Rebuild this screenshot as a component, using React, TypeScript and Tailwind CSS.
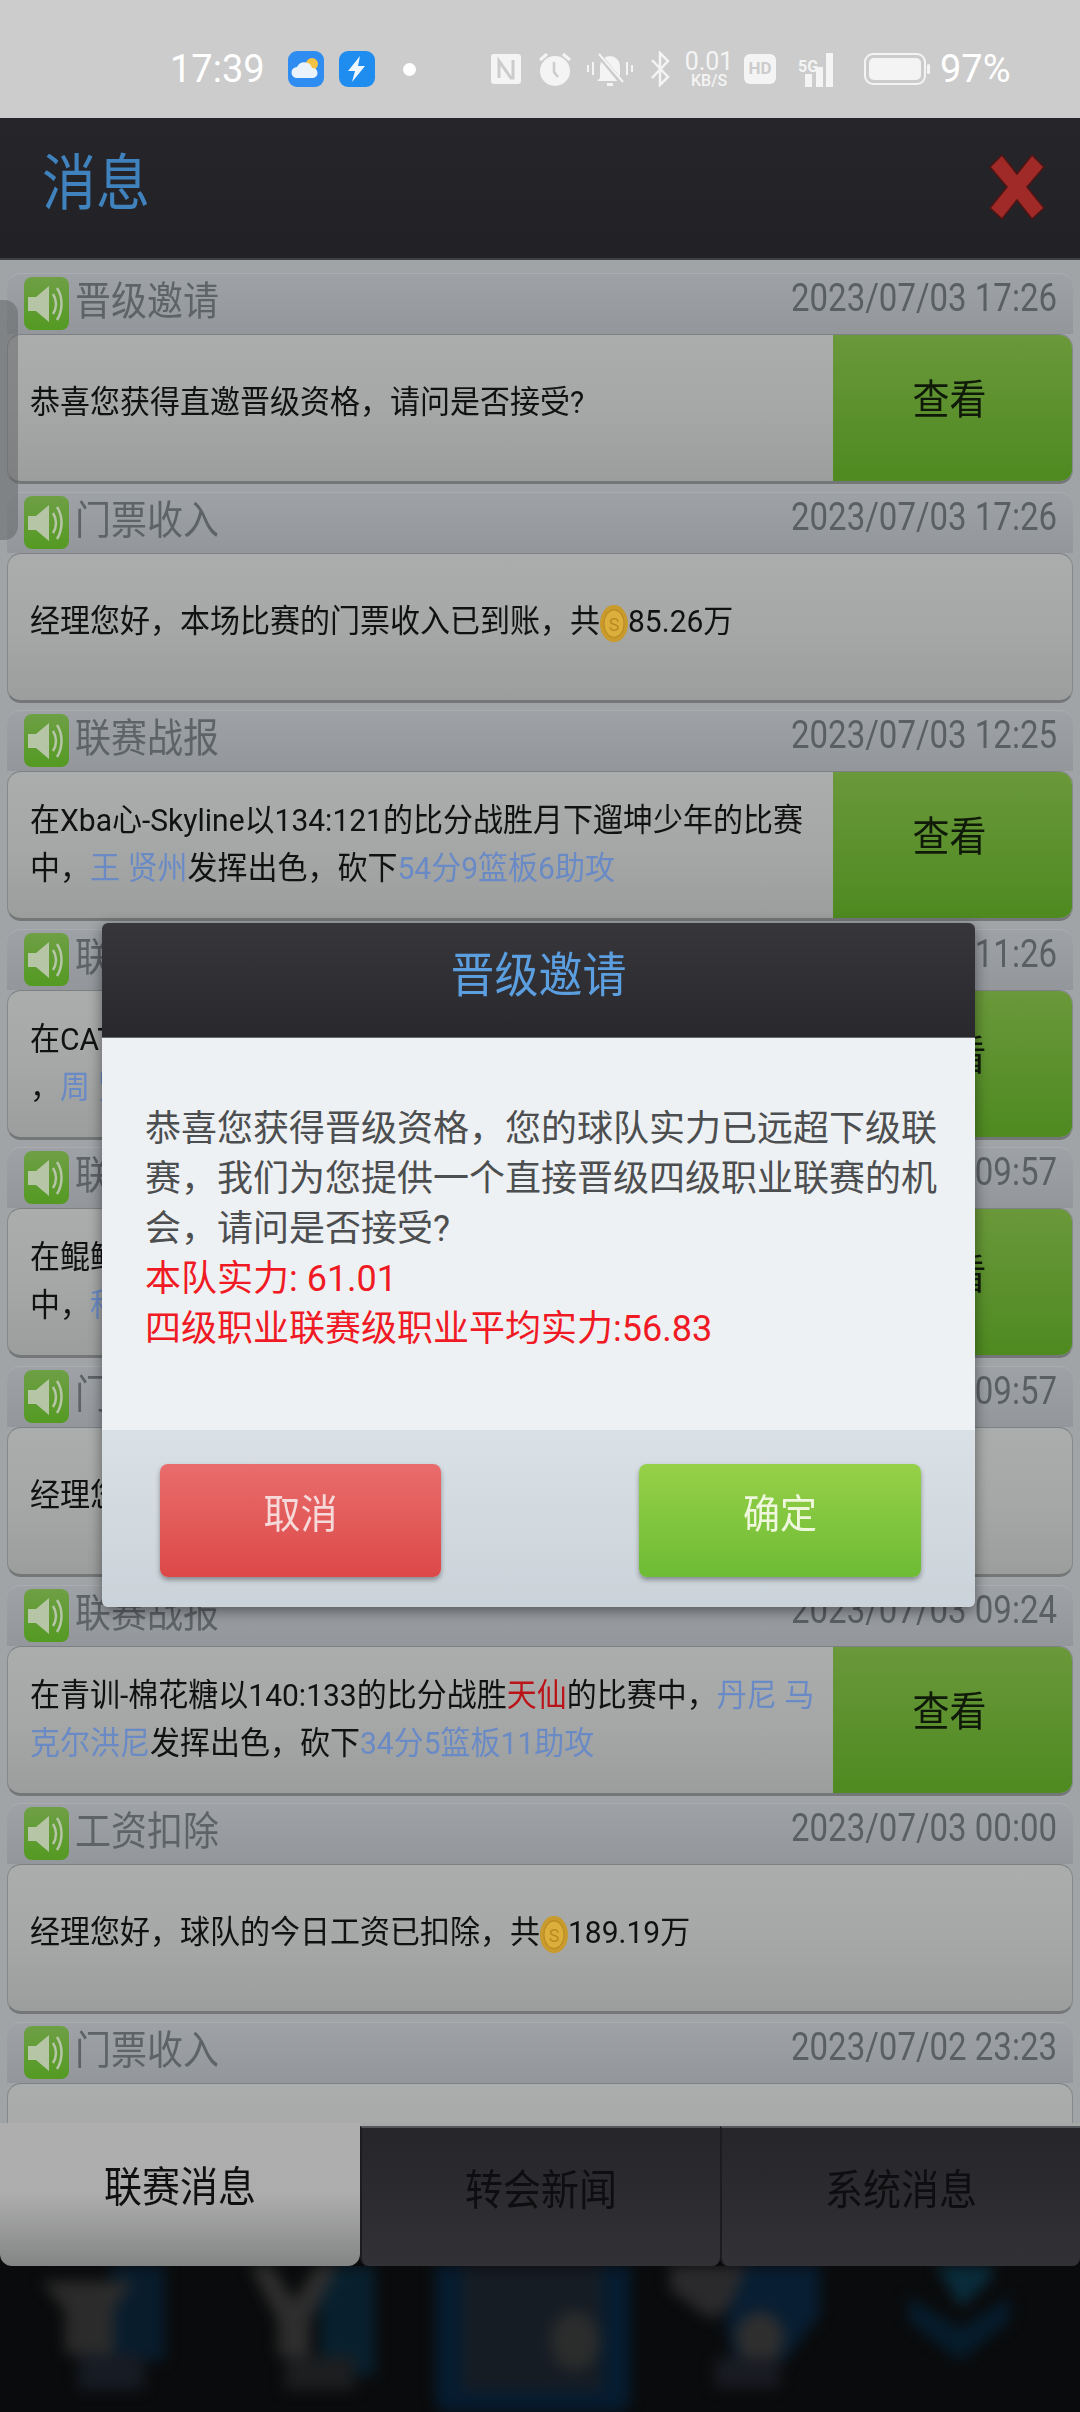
const stack = "font-[Roboto,'Noto_Sans_CJK_SC',sans-serif]";

type Part = { t: string; c?: "blue" | "red" } | { coin: true };

interface Message {
  title: string;
  time: string;
  lines: Part[][];
  button?: boolean;
}

const messages: Message[] = [
  {
    title: "晋级邀请",
    time: "2023/07/03 17:26",
    button: true,
    lines: [[{ t: "恭喜您获得直邀晋级资格，请问是否接受?" }]],
  },
  {
    title: "门票收入",
    time: "2023/07/03 17:26",
    lines: [[{ t: "经理您好，本场比赛的门票收入已到账，共" }, { coin: true }, { t: "85.26万" }]],
  },
  {
    title: "联赛战报",
    time: "2023/07/03 12:25",
    button: true,
    lines: [
      [{ t: "在Xba心-Skyline以134:121的比分战胜月下遛坤少年的比赛" }],
      [{ t: "中，" }, { t: "王 贤州", c: "blue" }, { t: "发挥出色，砍下" }, { t: "54分9篮板6助攻", c: "blue" }],
    ],
  },
  {
    title: "联赛战报",
    time: "2023/07/03 11:26",
    button: true,
    lines: [[{ t: "在CAT" }], [{ t: "，" }, { t: "周 贤", c: "blue" }]],
  },
  {
    title: "联赛战报",
    time: "2023/07/03 09:57",
    button: true,
    lines: [[{ t: "在鲲鲸" }], [{ t: "中，" }, { t: "科", c: "blue" }]],
  },
  {
    title: "门票收入",
    time: "2023/07/03 09:57",
    lines: [[{ t: "经理您好，本场比赛的门票收入已到账" }]],
  },
  {
    title: "联赛战报",
    time: "2023/07/03 09:24",
    button: true,
    lines: [
      [
        { t: "在青训-棉花糖以140:133的比分战胜" },
        { t: "天仙", c: "red" },
        { t: "的比赛中，" },
        { t: "丹尼 马", c: "blue" },
      ],
      [{ t: "克尔洪尼", c: "blue" }, { t: "发挥出色，砍下" }, { t: "34分5篮板11助攻", c: "blue" }],
    ],
  },
  {
    title: "工资扣除",
    time: "2023/07/03 00:00",
    lines: [[{ t: "经理您好，球队的今日工资已扣除，共" }, { coin: true }, { t: "189.19万" }]],
  },
  {
    title: "门票收入",
    time: "2023/07/02 23:23",
    lines: [[{ t: "" }]],
  },
];

const Speaker = () => (
  <svg width="45" height="53" viewBox="0 0 45 53" className="shrink-0">
    <defs>
      <linearGradient id="spk" x1="0" y1="0" x2="0" y2="1">
        <stop offset="0" stopColor="#6e9f45" />
        <stop offset="1" stopColor="#549a22" />
      </linearGradient>
    </defs>
    <rect width="45" height="53" rx="8" fill="url(#spk)" />
    <path d="M4 20h8L25 9v36L12 34H4z" fill="#b5c5a6" />
    <path d="M29 17c4 6 4 14 0 20" stroke="#b5c5a6" strokeWidth="2.5" fill="none" />
    <path d="M33 11c6 9 6 22 0 32" stroke="#b5c5a6" strokeWidth="2.5" fill="none" />
  </svg>
);

const Coin = () => (
  <svg width="28" height="35" viewBox="0 0 28 35" className="inline-block align-middle">
    <ellipse cx="14" cy="17.5" rx="14" ry="17.5" fill="#c99a2c" />
    <ellipse cx="14" cy="17.5" rx="10" ry="13" fill="#dcae3c" stroke="#b88a22" />
    <text x="14" y="24" textAnchor="middle" fontSize="18" fill="#b88a22" fontFamily="Roboto">
      S
    </text>
  </svg>
);

const MessageRow = ({ m }: { m: Message }) => (
  <div className="h-[218.6px] shrink-0 px-[7px]">
    <div className="flex h-[61px] items-start rounded-t-[14px] border-t border-[#a9adb0] bg-gradient-to-b from-[#9ea2a6] to-[#93979b] pt-[3px] pr-[16px] pl-[17px]">
      <Speaker />
      <div className="ml-[6px] flex flex-1 justify-between">
        <span className="-mt-[2px] inline-block origin-top scale-y-[1.1] text-[36px] leading-[48px] text-[#5e6367]">
          {m.title}
        </span>
        <span className="-mt-[4px] inline-block origin-top scale-y-[1.15] text-[33px] leading-[44px] text-[#5a5f63]">
          {m.time}
        </span>
      </div>
    </div>
    <div className="flex h-[150px] overflow-hidden rounded-[14px] border-x border-t border-b-[3px] border-x-[#86888a] border-t-[#7e8184] border-b-[#747677] bg-gradient-to-b from-[#abadad] via-[#a6a8a8] to-[#9c9e9e]">
      <div
        className={
          "flex flex-1 flex-col justify-center pl-[22px] text-[30px] leading-[48px] text-[#111111] " +
          (m.lines.length === 1 ? "pb-[12px]" : "pb-[2px]")
        }
      >
        {m.lines.map((line, i) => (
          <div key={i} className="origin-center scale-y-[1.06] whitespace-nowrap">
            {line.map((p, j) =>
              "coin" in p ? (
                <Coin key={j} />
              ) : (
                <span
                  key={j}
                  className={
                    p.c === "blue" ? "text-[#6a8ac6]" : p.c === "red" ? "text-[#bb1418]" : ""
                  }
                >
                  {p.t}
                </span>
              )
            )}
          </div>
        ))}
      </div>
      {m.button && (
        <div className="flex w-[239px] shrink-0 items-center justify-center bg-gradient-to-b from-[#6a983a] to-[#4e8a20] pr-[6px] pb-[14px] text-[37px] text-[#101a08]">
          <span className="inline-block scale-y-[1.12]">查看</span>
        </div>
      )}
    </div>
  </div>
);

const StatusBar = () => (
  <div className="flex h-[118px] shrink-0 items-center bg-[#cccccc] pt-[20px] pl-[170px] text-white">
    <span className="w-[92px] text-[38px] leading-none">17:39</span>
    <svg width="36" height="36" viewBox="0 0 36 36" className="ml-[26px]">
      <rect width="36" height="36" rx="9" fill="#2f8cf0" />
      <circle cx="24" cy="13" r="6" fill="#f6c244" />
      <path d="M9 27a5.5 5.5 0 0 1 0-11 8 8 0 0 1 15 1 5 5 0 0 1 1 10z" fill="#eaf2fb" />
    </svg>
    <svg width="36" height="36" viewBox="0 0 36 36" className="ml-[15px]">
      <rect width="36" height="36" rx="9" fill="#1f8df0" />
      <path d="M21 5 9 20h7l-3 11 13-16h-7z" fill="#eef7ff" />
    </svg>
    <span className="ml-[28px] h-[13px] w-[13px] rounded-full bg-white" />
    <svg width="30" height="30" viewBox="0 0 30 30" className="ml-[75px]">
      <rect width="30" height="30" rx="3" fill="#f4f4f4" />
      <path d="M8 24V7l12 17h2V6" stroke="#cccccc" strokeWidth="3" fill="none" />
    </svg>
    <svg width="34" height="36" viewBox="0 0 34 36" className="ml-[17px]">
      <circle cx="17" cy="20" r="15" fill="#f4f4f4" />
      <path d="M16 11v10l4 5" stroke="#cccccc" strokeWidth="2.5" fill="none" />
      <path d="M2 9 9 3M32 9l-7-6" stroke="#f4f4f4" strokeWidth="3" />
    </svg>
    <svg width="46" height="36" viewBox="0 0 46 36" className="ml-[15px]">
      <path d="M13 27V15a10 10 0 0 1 20 0v12l3 3H10z" fill="#f4f4f4" />
      <path d="M20 32h6v3h-6z" fill="#f4f4f4" />
      <path d="M11 3l25 30" stroke="#cccccc" strokeWidth="5" />
      <path d="M12 3l24 28" stroke="#f4f4f4" strokeWidth="2" />
      <path d="M1 14v7M6 11v13M40 11v13M45 14v7" stroke="#f4f4f4" strokeWidth="2" />
    </svg>
    <svg width="20" height="36" viewBox="0 0 20 36" className="ml-[17px]">
      <path d="M2 9l16 17-8 8V2l8 8L2 27" stroke="#f4f4f4" strokeWidth="2.5" fill="none" />
    </svg>
    <div className="ml-[16px] flex w-[46px] flex-col items-center text-[#f4f4f4]">
      <span className="text-[25px] leading-[22px]">0.01</span>
      <span className="text-[16px] font-medium leading-[15px]">KB/S</span>
    </div>
    <div className="ml-[12px] flex h-[30px] w-[32px] items-center justify-center rounded-[6px] bg-[#f4f4f4] text-[17px] font-bold text-[#cccccc]">
      HD
    </div>
    <div className="ml-[14px] flex h-[36px] w-[58px] items-end text-[#f4f4f4]">
      <span className="mb-[12px] ml-[8px] w-[22px] text-[16px] font-bold leading-[16px]">5G</span>
      <svg width="28" height="34" viewBox="0 0 28 34" className="-ml-[15px]">
        <rect x="0" y="21" width="7" height="13" fill="#f4f4f4" />
        <rect x="11" y="14" width="7" height="20" fill="#f4f4f4" />
        <rect x="21" y="0" width="7" height="34" fill="#f4f4f4" />
      </svg>
    </div>
    <svg width="66" height="32" viewBox="0 0 66 32" className="ml-[16px]">
      <rect x="1" y="1" width="60" height="30" rx="8" fill="none" stroke="#f4f4f4" strokeWidth="2" />
      <rect x="5" y="5" width="52" height="22" rx="5" fill="#f4f4f4" />
      <rect x="63" y="11" width="3" height="10" rx="1.5" fill="#f4f4f4" />
    </svg>
    <span className="ml-[10px] text-[38px] leading-none">97%</span>
  </div>
);

const Header = () => (
  <div className="flex h-[142px] shrink-0 items-center justify-between border-b-2 border-[#3c4043] bg-gradient-to-b from-[#26262a] to-[#222226] pr-[35px] pb-[8px] pl-[42px]">
    <span className="inline-block scale-y-[1.14] text-[54px] leading-none text-[#3f82bd]">消息</span>
    <svg width="56" height="66" viewBox="0 0 56 66" className="mt-[6px]">
      <path
        d="M13 1 28 20 43 1 55 13 38 33 55 54 43 65 28 46 13 65 1 54 18 33 1 13z"
        fill="#a02a28"
        stroke="#4f1414"
        strokeWidth="1.5"
      />
    </svg>
  </div>
);

const Tabs = () => (
  <div className="flex h-[143px] shrink-0 bg-[linear-gradient(#a6a8a8_3px,#0a0b0c_3px)]">
    <div className="flex w-[360px] items-center justify-center rounded-b-[12px] bg-gradient-to-b from-[#aeaeae] via-[#adadad] to-[#848585] pb-[14px] text-[#101010]">
      <span className="inline-block scale-y-[1.12] text-[38px]">联赛消息</span>
    </div>
    <div className="mt-[3px] flex w-[360px] items-center justify-center rounded-b-[8px] border-t-2 border-l-2 border-t-[#55585a] border-l-[#1c1c1e] bg-gradient-to-b from-[#26262a] to-[#323236] pb-[14px] text-[#0e0e10]">
      <span className="inline-block scale-y-[1.12] text-[38px]">转会新闻</span>
    </div>
    <div className="mt-[3px] flex w-[360px] items-center justify-center rounded-b-[8px] border-t-2 border-l-2 border-t-[#55585a] border-l-[#1c1c1e] bg-gradient-to-b from-[#26262a] to-[#323236] pb-[14px] text-[#0e0e10]">
      <span className="inline-block scale-y-[1.12] text-[38px]">系统消息</span>
    </div>
  </div>
);

const BlurredNav = () => (
  <div className="h-[146px] shrink-0 overflow-hidden bg-[#0a0b0c]">
    <svg width="1080" height="146" viewBox="0 0 1080 146" className="blur-[7px]">
      <rect x="110" y="-10" width="55" height="105" fill="#081c2c" />
      <path d="M42 15h92l-20 28v45H65V45z" fill="#2b2b2b" />
      <rect x="78" y="88" width="66" height="36" fill="#171b24" />
      <rect x="320" y="-10" width="55" height="120" fill="#08202e" />
      <path d="M250 0h22l22 35 22-35h22l-28 55v35h-32V55z" fill="#2e2e2e" />
      <rect x="285" y="90" width="70" height="34" fill="#1c1e20" />
      <rect x="435" y="-20" width="196" height="170" rx="20" fill="#061c30" />
      <rect x="462" y="-20" width="140" height="145" fill="#151c24" />
      <ellipse cx="575" cy="75" rx="25" ry="30" fill="#2b2c2c" />
      <path d="M670 -10h82v34l-40 30-42-30z" fill="#2a2a2c" />
      <path d="M750 -10h70v60l-40 50h-45l-10-45z" fill="#081e32" />
      <ellipse cx="760" cy="72" rx="24" ry="26" fill="#2e2e2e" />
      <rect x="715" y="92" width="65" height="30" fill="#191b22" />
      <path d="M930 -10h62v22l-31 30z" fill="#0a2c3c" />
      <path d="M908 30l52 32 50-32v25l-50 40-52-40z" fill="#061c2c" />
    </svg>
  </div>
);

const Modal = () => (
  <div className="absolute left-[102px] top-[923px] w-[873px] overflow-hidden rounded-[6px] shadow-[0_4px_14px_rgba(0,0,0,0.45)]">
    <div className="flex h-[115px] items-center justify-center border-b border-[#66686a] bg-gradient-to-b from-[#37373b] to-[#29292d] pb-[8px]">
      <span className="inline-block scale-y-[1.08] text-[44px] leading-none text-[#5b9fe0]">晋级邀请</span>
    </div>
    <div className="h-[392px] bg-[#eef1f3] pr-[36px] pl-[43px] pt-[66px] text-[36px] leading-[50px] text-[#4c4e50]">
      <div>恭喜您获得晋级资格，您的球队实力已远超下级联赛，我们为您提供一个直接晋级四级职业联赛的机会，请问是否接受?</div>
      <div className="text-[#f01a24]">本队实力: 61.01</div>
      <div className="text-[#f01a24]">四级职业联赛级职业平均实力:56.83</div>
    </div>
    <div className="flex h-[177px] items-start justify-between bg-gradient-to-b from-[#d9e0e6] to-[#cbd3da] pt-[34px] pr-[54px] pl-[58px]">
      <div className="flex h-[113px] w-[281px] items-center justify-center rounded-[8px] bg-gradient-to-b from-[#e96c6c] to-[#dc4848] pb-[12px] text-[37px] text-[#f6dada] shadow-[0_3px_5px_rgba(0,0,0,0.35)]">
        <span className="inline-block scale-y-[1.08]">取消</span>
      </div>
      <div className="flex h-[113px] w-[282px] items-center justify-center rounded-[8px] bg-gradient-to-b from-[#96d048] to-[#6dbc34] pb-[12px] text-[37px] text-[#eef7dc] shadow-[0_3px_5px_rgba(0,0,0,0.35)]">
        <span className="inline-block scale-y-[1.08]">确定</span>
      </div>
    </div>
  </div>
);

export default function App() {
  return (
    <div className={"relative flex h-[2412px] w-[1080px] flex-col overflow-hidden bg-[#a0a4a7] " + stack}>
      <StatusBar />
      <Header />
      <div className="relative flex min-h-0 flex-1 flex-col overflow-hidden pt-[13px]">
        {messages.map((m, i) => (
          <MessageRow key={i} m={m} />
        ))}
        {/* scroll thumb */}
        <div className="absolute left-0 top-[40px] h-[240px] w-[18px] rounded-r-[14px] bg-[#5f6263]/50" />
      </div>
      <Tabs />
      <BlurredNav />
      <Modal />
    </div>
  );
}
